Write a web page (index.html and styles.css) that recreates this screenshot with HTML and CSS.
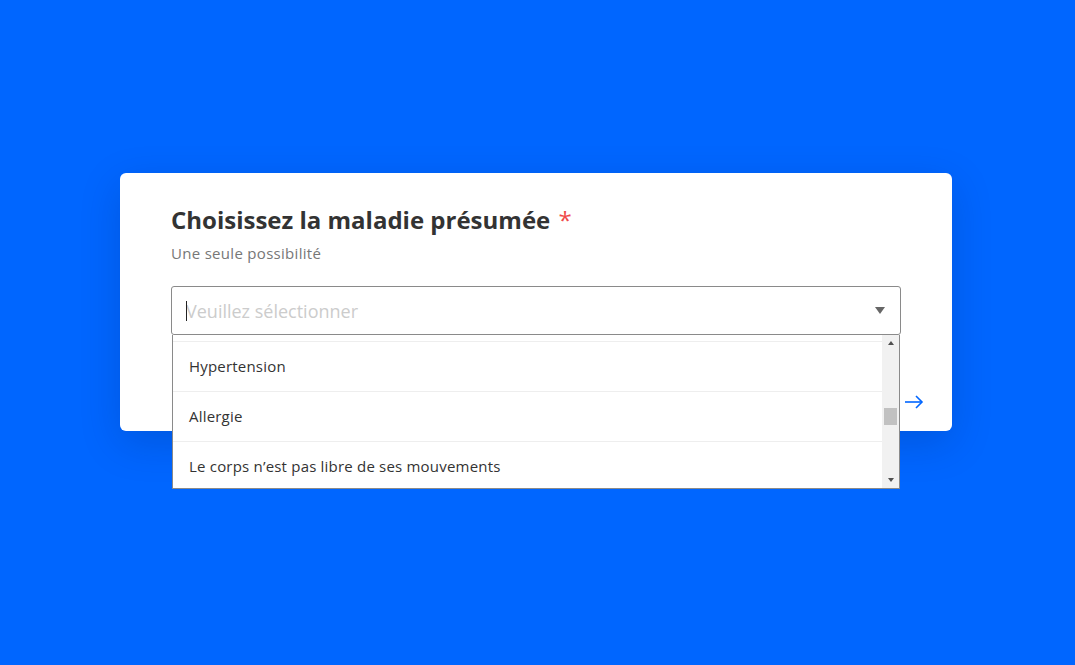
FILE: index.html
```html
<!DOCTYPE html>
<html lang="fr">
<head>
  <meta charset="UTF-8" />
  <meta name="viewport" content="width=device-width, initial-scale=1.0" />
  <title>Choisissez la maladie présumée</title>
  <link rel="stylesheet" href="styles.css">
</head>
<body>
  <div class="card">
    <h2 class="question">Choisissez la maladie présumée <span class="required">*</span></h2>
    <p class="hint">Une seule possibilité</p>

    <div class="select-wrap">
      <div class="select">
        <span class="placeholder">Veuillez sélectionner</span>
        <span class="select-arrow"></span>
      </div>

      <div class="dropdown">
        <div class="options">
          <!-- list is scrolled: only the tail of the previous item shows -->
          <div class="option-tail"></div>
          <div class="option">Hypertension</div>
          <div class="option">Allergie</div>
          <div class="option">Le corps n’est pas libre de ses mouvements</div>
        </div>
        <div class="scrollbar">
          <span class="sb-up"></span>
          <span class="sb-track"><span class="sb-thumb"></span></span>
          <span class="sb-down"></span>
        </div>
      </div>
    </div>

    <div class="footer">
      <button class="next" aria-label="Suivant">
        <svg width="20" height="14" viewBox="0 0 20 14" fill="none" stroke="#0066ff" stroke-width="1.6">
          <path d="M1 7h17" />
          <path d="M12 1l6 6-6 6" />
        </svg>
      </button>
    </div>
  </div>
</body>
</html>
```

FILE: styles.css
```css
:root {
  --bg: #0066ff;
  --text: #333333;
  --muted: #777777;
  --border: #8a8a8a;
  --line: #eeeeee;
}

body {
  margin: 0;
  min-height: 665px;
  background: var(--bg);
  font-family: 'Open Sans', 'Noto Sans', sans-serif;
  color: var(--text);
  display: flex;
  align-items: flex-start;
  padding: 173px 0 0 120px;
  box-sizing: border-box;
}

.card {
  width: 832px;
  box-sizing: border-box;
  background: #ffffff;
  border-radius: 6px;
  box-shadow: 0 12px 40px rgba(0, 20, 80, 0.18);
  padding: 32px 51px 12px;
}

.question {
  margin: 0;
  font-size: 24px;
  line-height: 30px;
  font-weight: 700;
  color: var(--text);
}

.required {
  color: #f04a4a;
  font-weight: 400;
  margin-left: 2px;
}

.hint {
  margin: 8px 0 0;
  font-size: 15px;
  line-height: 20px;
  letter-spacing: 0.3px;
  color: var(--muted);
}

.select-wrap {
  position: relative;
  margin-top: 23px;
}

.select {
  height: 49px;
  box-sizing: border-box;
  border: 1px solid var(--border);
  border-radius: 3px;
  display: flex;
  align-items: center;
  padding: 0 14px;
}

.placeholder {
  flex: 1;
  font-size: 18px;
  line-height: 26px;
  color: #cccccc;
  position: relative;
}

.placeholder::before {
  content: "";
  position: absolute;
  left: 0;
  top: 3px;
  width: 1px;
  height: 20px;
  background: #222;
}

.select-arrow {
  width: 0;
  height: 0;
  border-left: 5px solid transparent;
  border-right: 5px solid transparent;
  border-top: 7px solid #666;
  margin-right: 1px;
}

.dropdown {
  position: absolute;
  top: 49px;
  left: 1px;
  right: 1px;
  height: 154px;
  box-sizing: border-box;
  background: #ffffff;
  border: 1px solid var(--border);
  border-top: none;
  display: flex;
  overflow: hidden;
}

.options {
  flex: 1;
}

.option-tail {
  height: 6px;
  border-bottom: 1px solid var(--line);
}

.option {
  height: 50px;
  box-sizing: border-box;
  border-bottom: 1px solid var(--line);
  padding: 0 0 1px 16px;
  display: flex;
  align-items: center;
  font-size: 15px;
  letter-spacing: 0.2px;
  color: var(--text);
}

.scrollbar {
  width: 17px;
  background: #f1f1f1;
  display: flex;
  flex-direction: column;
  align-items: center;
}

.sb-up, .sb-down {
  width: 0;
  height: 0;
  margin: 6px 0;
  border-left: 3px solid transparent;
  border-right: 3px solid transparent;
}

.sb-up {
  border-bottom: 4px solid #505050;
}

.sb-down {
  border-top: 4px solid #505050;
}

.sb-track {
  flex: 1;
  width: 100%;
  position: relative;
}

.sb-thumb {
  position: absolute;
  left: 2px;
  right: 2px;
  top: 57px;
  height: 17px;
  background: #c1c1c1;
}

.footer {
  display: flex;
  justify-content: flex-end;
  margin-top: 50px;
  margin-right: -26px;
}

.next {
  height: 34px;
  width: 26px;
  padding: 0;
  border: none;
  background: none;
  display: flex;
  align-items: center;
  justify-content: center;
  cursor: pointer;
}
```
